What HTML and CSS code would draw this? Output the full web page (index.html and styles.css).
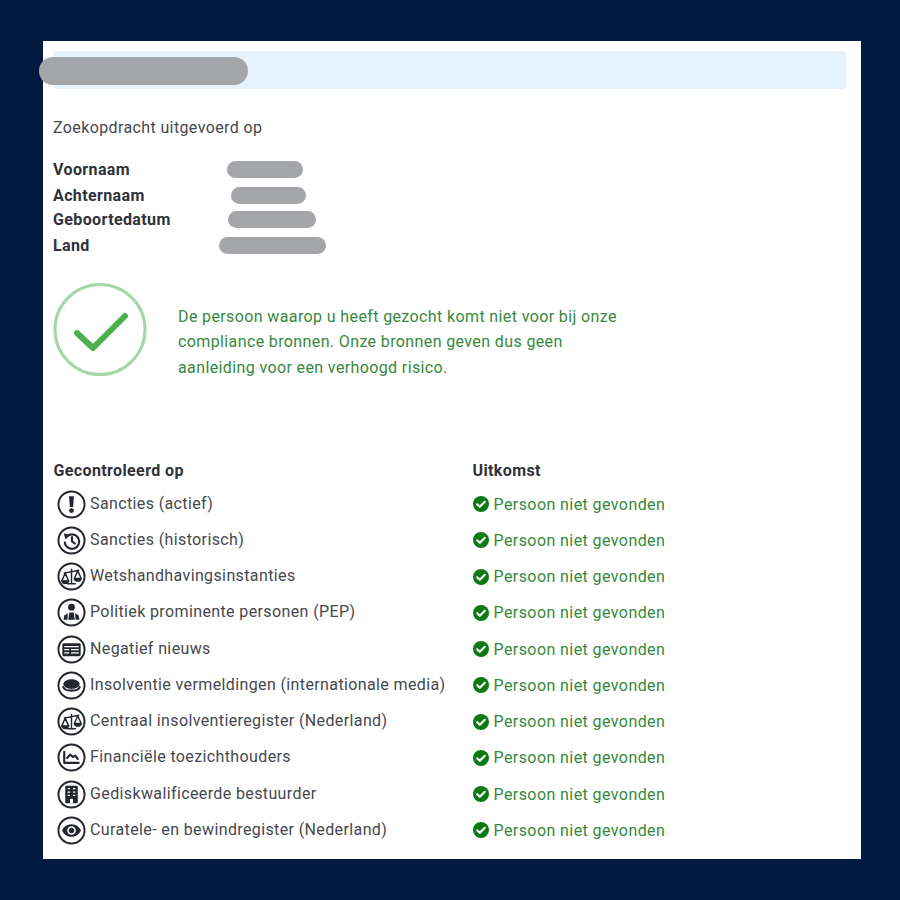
FILE: index.html
```html
<!DOCTYPE html>
<html>
	<head>
		<title>Zoekopdracht</title>
		<meta name="viewport" content="width=device-width, initial-scale=1" />
		<link rel="stylesheet" href="styles.css">
	</head>
	<body>
		<main class="card">
			<div class="banner"><span class="redact redact-title"></span></div>
			<p class="intro">Zoekopdracht uitgevoerd op</p>
			<dl class="details">
				<div class="detail"><dt>Voornaam</dt><dd><span class="redact redact-a"></span></dd></div>
				<div class="detail"><dt>Achternaam</dt><dd><span class="redact redact-b"></span></dd></div>
				<div class="detail"><dt>Geboortedatum</dt><dd><span class="redact redact-c"></span></dd></div>
				<div class="detail"><dt>Land</dt><dd><span class="redact redact-d"></span></dd></div>
			</dl>
			<section class="verdict">
				<svg class="verdict-icon" width="94" height="94" viewBox="0 0 94 94">
					<circle cx="47" cy="46.500" r="45" fill="none" stroke="#a5d6a7" stroke-width="3"/>
					<path d="M24 50 L40 65 L72 33" fill="none" stroke="#4caf50" stroke-width="6" stroke-linecap="round" stroke-linejoin="round"/>
				</svg>
				<p>De persoon waarop u heeft gezocht komt niet voor bij onze<br>compliance bronnen. Onze bronnen geven dus geen<br>aanleiding voor een verhoogd risico.</p>
			</section>
			<section class="checks">
				<div class="checks-head"><span>Gecontroleerd op</span><span>Uitkomst</span></div>

				<div class="check">
					<div class="source">
						<svg class="source-icon" viewBox="0 0 30 30"><circle cx="15" cy="15" r="13.500"/><path class="fill" d="M12.500 6.500h5l-.8 11h-3.400z"/><circle class="fill" cx="15" cy="21.300" r="2.500"/></svg>
						<span>Sancties (actief)</span>
					</div>
					<div class="result"><svg class="ok" viewBox="0 0 16 16"><circle cx="8" cy="8" r="8"/><path d="M4.200 8.300l2.600 2.500 5-5"/></svg>Persoon niet gevonden</div>
				</div>

				<div class="check">
					<div class="source">
						<svg class="source-icon" viewBox="0 0 30 30"><circle cx="15" cy="15" r="13.500"/><path class="line" d="M10.500 10.500a7.500 7.500 0 1 1-2.500 6.500"/><path class="fill" d="M7 7.500l6.500 1.800-4.700 4.700z"/><path class="line" d="M15.500 11.500v4.500l3 2.200"/></svg>
						<span>Sancties (historisch)</span>
					</div>
					<div class="result"><svg class="ok" viewBox="0 0 16 16"><circle cx="8" cy="8" r="8"/><path d="M4.200 8.300l2.600 2.500 5-5"/></svg>Persoon niet gevonden</div>
				</div>

				<div class="check">
					<div class="source">
						<svg class="source-icon" viewBox="0 0 30 30"><circle cx="15" cy="15" r="13.500"/><path class="thin" d="M15 7v15M10.500 22.500h9M7 11.500l16-3M8.500 11.500l-3.500 8h7zM21.500 9l-3.500 8h7z"/><path class="fill" d="M4.500 19.500a4 3.500 0 0 0 8 0zM17.500 17a4 3.500 0 0 0 8 0z"/></svg>
						<span>Wetshandhavingsinstanties</span>
					</div>
					<div class="result"><svg class="ok" viewBox="0 0 16 16"><circle cx="8" cy="8" r="8"/><path d="M4.200 8.300l2.600 2.500 5-5"/></svg>Persoon niet gevonden</div>
				</div>

				<div class="check">
					<div class="source">
						<svg class="source-icon" viewBox="0 0 30 30"><circle cx="15" cy="15" r="13.500"/><circle class="fill" cx="15" cy="9.500" r="3.500"/><path class="fill" d="M12.700 15h4.600l1 7.500h-6.600zM6.800 22.500l.7-4.500 3.800-2.200-.5 6.700zM23.200 22.500l-.7-4.500-3.800-2.200.5 6.700z"/></svg>
						<span>Politiek prominente personen (PEP)</span>
					</div>
					<div class="result"><svg class="ok" viewBox="0 0 16 16"><circle cx="8" cy="8" r="8"/><path d="M4.200 8.300l2.600 2.500 5-5"/></svg>Persoon niet gevonden</div>
				</div>

				<div class="check">
					<div class="source">
						<svg class="source-icon" viewBox="0 0 30 30"><circle cx="15" cy="15" r="13.500"/><rect class="fill" x="5.500" y="8.500" width="19" height="13.500" rx="1.500"/><path class="cut" d="M7.500 12h15M7.500 15.200h5M14.500 15.200h8M7.500 18.500h5M14.500 18.500h8"/></svg>
						<span>Negatief nieuws</span>
					</div>
					<div class="result"><svg class="ok" viewBox="0 0 16 16"><circle cx="8" cy="8" r="8"/><path d="M4.200 8.300l2.600 2.500 5-5"/></svg>Persoon niet gevonden</div>
				</div>

				<div class="check">
					<div class="source">
						<svg class="source-icon" viewBox="0 0 30 30"><circle cx="15" cy="15" r="13.500"/><ellipse class="fill" cx="15" cy="13.500" rx="8.500" ry="5"/><path class="line" d="M6.500 16.500c1.500 5 15.500 5 17 0"/></svg>
						<span>Insolventie vermeldingen (internationale media)</span>
					</div>
					<div class="result"><svg class="ok" viewBox="0 0 16 16"><circle cx="8" cy="8" r="8"/><path d="M4.200 8.300l2.600 2.500 5-5"/></svg>Persoon niet gevonden</div>
				</div>

				<div class="check">
					<div class="source">
						<svg class="source-icon" viewBox="0 0 30 30"><circle cx="15" cy="15" r="13.500"/><path class="thin" d="M15 7v15M10.500 22.500h9M7 11.500l16-3M8.500 11.500l-3.500 8h7zM21.500 9l-3.500 8h7z"/><path class="fill" d="M4.500 19.500a4 3.500 0 0 0 8 0zM17.500 17a4 3.500 0 0 0 8 0z"/></svg>
						<span>Centraal insolventieregister (Nederland)</span>
					</div>
					<div class="result"><svg class="ok" viewBox="0 0 16 16"><circle cx="8" cy="8" r="8"/><path d="M4.200 8.300l2.600 2.500 5-5"/></svg>Persoon niet gevonden</div>
				</div>

				<div class="check">
					<div class="source">
						<svg class="source-icon" viewBox="0 0 30 30"><circle cx="15" cy="15" r="13.500"/><path class="line" d="M7.500 9v11.500h15"/><path class="line" d="M10.500 15.500l3-3.500 3 2.500 2.500-1.500 2.500 3.500"/></svg>
						<span>Financiële toezichthouders</span>
					</div>
					<div class="result"><svg class="ok" viewBox="0 0 16 16"><circle cx="8" cy="8" r="8"/><path d="M4.200 8.300l2.600 2.500 5-5"/></svg>Persoon niet gevonden</div>
				</div>

				<div class="check">
					<div class="source">
						<svg class="source-icon" viewBox="0 0 30 30"><circle cx="15" cy="15" r="13.500"/><rect class="fill" x="8.500" y="6" width="13" height="18" rx="1"/><path class="cut" d="M11 9h2.500M16.500 9h2.500M11 12.500h2.500M16.500 12.500h2.500M11 16h2.500M16.500 16h2.500"/><rect class="cutfill" x="13.500" y="19.500" width="3" height="4.500"/></svg>
						<span>Gediskwalificeerde bestuurder</span>
					</div>
					<div class="result"><svg class="ok" viewBox="0 0 16 16"><circle cx="8" cy="8" r="8"/><path d="M4.200 8.300l2.600 2.500 5-5"/></svg>Persoon niet gevonden</div>
				</div>

				<div class="check">
					<div class="source">
						<svg class="source-icon" viewBox="0 0 30 30"><circle cx="15" cy="15" r="13.500"/><path class="fill" d="M15 8.500c-4.800 0-8.200 3-9.800 6.500 1.600 3.500 5 6.500 9.800 6.500s8.200-3 9.800-6.500c-1.600-3.500-5-6.500-9.800-6.500z"/><circle class="cutfill" cx="15" cy="15" r="4.500"/><circle class="fill" cx="15" cy="15" r="2.800"/></svg>
						<span>Curatele- en bewindregister (Nederland)</span>
					</div>
					<div class="result"><svg class="ok" viewBox="0 0 16 16"><circle cx="8" cy="8" r="8"/><path d="M4.200 8.300l2.600 2.500 5-5"/></svg>Persoon niet gevonden</div>
				</div>
			</section>
		</main>
	</body>
</html>
```

FILE: styles.css
```css
html, body { height: 100%; }
body {
	background: #021a40;
	font-family: Roboto, sans-serif;
	font-size: 16px;
	color: #45484f;
	margin: 0;
	padding: 41px 39px 41px 43px;
	box-sizing: border-box;
	letter-spacing: 0.38px;
}
.card {
	background: #fff;
	height: 818px;
	padding: 10px 15px 0 10px;
	box-sizing: border-box;
}
.banner {
	background: #e6f3fc;
	height: 38px;
	border-radius: 3px;
	position: relative;
}
.redact {
	display: block;
	background: #a5a6a9;
	border-radius: 9px;
	height: 17px;
}
.redact-title {
	position: absolute;
	left: -14px;
	top: 6px;
	width: 209px;
	height: 28px;
	border-radius: 14px;
}
.intro { margin: 29px 0 0; line-height: 19px; }
.details { margin: 20px 0 0; }
.detail { display: flex; height: 25px; align-items: center; }
.detail:nth-child(even) { margin: 1px 0 -1px; }
dt { font-weight: 700; color: #2f323a; width: 160px; }
dd { margin: 0; }
.redact-a { width: 76px; margin-left: 14px; }
.redact-b { width: 75px; margin-left: 18px; }
.redact-c { width: 88px; margin-left: 15px; }
.redact-d { width: 107px; margin-left: 6px; }
.verdict {
	display: flex;
	align-items: flex-start;
	margin-top: 26px;
}
.verdict-icon { flex: none; }
.verdict p {
	margin: 20.5px 0 0 31px;
	color: #36883c;
	line-height: 25.5px;
}
.checks { margin-top: 81px; }
.checks-head {
	display: grid;
	grid-template-columns: 419px 1fr;
	font-weight: 700;
	color: #2f323a;
	line-height: 19px;
	margin: 0 0 6px 0.5px;
}
.check {
	display: grid;
	grid-template-columns: 419px 1fr;
	height: 36.25px;
	align-items: center;
}
.source { display: flex; align-items: center; padding-left: 4px; }
.source span { margin: -2px 0 0 4px; white-space: nowrap; }
.source-icon {
	width: 29px;
	height: 29px;
	flex: none;
	fill: none;
	stroke: #23262d;
	stroke-width: 2;
}
.source-icon .fill { fill: #23262d; stroke: none; }
.source-icon .line { stroke-width: 2.2; stroke-linecap: round; stroke-linejoin: round; }
.source-icon .thin { stroke-width: 1.5; }
.source-icon .cut { stroke: #fff; stroke-width: 1.3; }
.source-icon .cutfill { fill: #fff; stroke: none; }
.result {
	display: flex;
	align-items: center;
	color: #36883c;
	margin-left: 0.5px;
	letter-spacing: 0.42px;
}
.ok { width: 16px; height: 16px; margin-right: 5px; flex: none; }
.ok circle { fill: #0b7a12; }
.ok path { fill: none; stroke: #fff; stroke-width: 2.2; stroke-linecap: round; stroke-linejoin: round; }
```
